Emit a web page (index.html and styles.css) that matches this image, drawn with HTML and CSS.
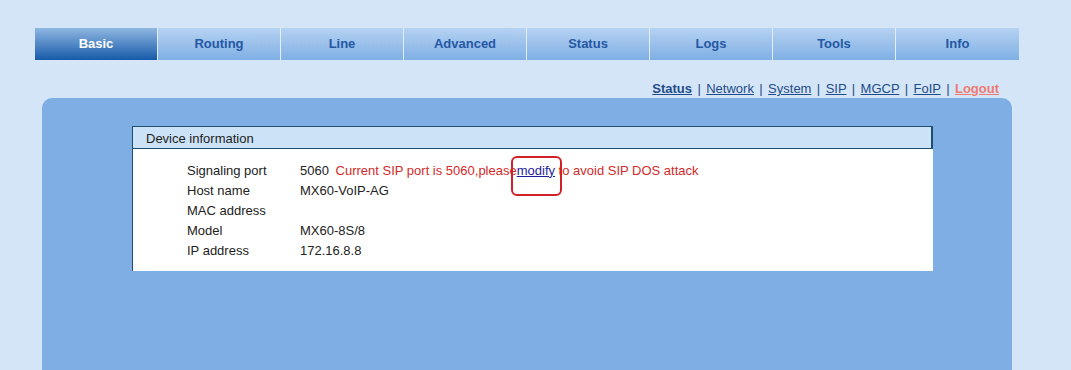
FILE: index.html
```html
<!DOCTYPE html>
<html>

<head>
    <link rel="stylesheet" href="styles.css">
</head>

<body>

    <div class="page">
        <div class="menu">
            <a class="tab active">Basic</a>
            <a class="tab">Routing</a>
            <a class="tab">Line</a>
            <a class="tab">Advanced</a>
            <a class="tab">Status</a>
            <a class="tab">Logs</a>
            <a class="tab">Tools</a>
            <a class="tab">Info</a>
        </div>

        <div class="sub-links">
            <a class="current">Status</a> |
            <a>Network</a> |
            <a>System</a> |
            <a>SIP</a> |
            <a>MGCP</a> |
            <a>FoIP</a> |
            <a class="logout">Logout</a>
        </div>

        <div class="panel">
            <div class="info-box">
                <div class="info-title">Device information</div>
                <table class="info-table">
                    <tr>
                        <td class="label">Signaling port</td>
                        <td>5060 <span class="warn">Current SIP port is 5060,please<span class="mark"><a class="modify">modify</a></span> to avoid SIP DOS attack</span></td>
                    </tr>
                    <tr>
                        <td class="label">Host name</td>
                        <td>MX60-VoIP-AG</td>
                    </tr>
                    <tr>
                        <td class="label">MAC address</td>
                        <td></td>
                    </tr>
                    <tr>
                        <td class="label">Model</td>
                        <td>MX60-8S/8</td>
                    </tr>
                    <tr>
                        <td class="label">IP address</td>
                        <td>172.16.8.8</td>
                    </tr>
                </table>
            </div>
        </div>
    </div>

</body>

</html>
```

FILE: styles.css
```css
body {
    margin: 0;
    background-color: #d4e5f7;
    font-family: "Liberation Sans", Arial, sans-serif;
    color: #222;
}

.page {
    padding: 28px 0 0 35px;
}

.menu {
    display: flex;
    width: 984px;
    height: 32px;
}

.tab {
    width: 123px;
    box-sizing: border-box;
    border-right: 1px solid #e4eefa;
    background: linear-gradient(#b6d2f2, #7fafe4);
    color: #2558a3;
    font-size: 13px;
    font-weight: bold;
    text-align: center;
    line-height: 32px;
}

.tab:last-child {
    border-right: none;
}

.tab.active {
    background: linear-gradient(#8fb7e2, #175aa9);
    color: #fff;
}

.sub-links {
    width: 964px;
    height: 38px;
    box-sizing: border-box;
    padding-top: 21px;
    text-align: right;
    font-size: 13px;
    word-spacing: 1.8px;
    color: #1f4c7f;
}

.sub-links a {
    color: #1f4c88;
    text-decoration: underline;
}

.sub-links a.current {
    font-weight: bold;
}

.sub-links a.logout {
    color: #f07a72;
    font-weight: bold;
}

.panel {
    margin-left: 7px;
    width: 970px;
    height: 272px;
    padding: 28px 0 0 90px;
    box-sizing: border-box;
    background-color: #7eaee3;
    border-radius: 10px 10px 0 0;
}

.info-box {
    width: 800px;
    background-color: #fff;
    border-left: 1px solid #1f4d6e;
    padding-bottom: 11px;
}

.info-title {
    height: 21px;
    line-height: 23px;
    padding-left: 13px;
    background-color: #cce3f7;
    border: 1px solid #1f4d6e;
    border-left: none;
    border-right-width: 2px;
    font-size: 13px;
    color: #222;
}

.info-table {
    margin: 11px 0 0 54px;
    border-collapse: collapse;
    font-size: 13px;
}

.info-table td {
    height: 20px;
    padding: 0;
}

.info-table td.label {
    width: 113px;
}

.warn {
    color: #d12a2a;
    margin-left: 3px;
}

.mark {
    position: relative;
}

.mark::after {
    content: "";
    position: absolute;
    left: -6px;
    top: -7px;
    width: 47px;
    height: 36px;
    border: 2px solid #d0202a;
    border-radius: 6px;
}

.modify {
    color: #1d1d9c;
    text-decoration: underline;
}
```
